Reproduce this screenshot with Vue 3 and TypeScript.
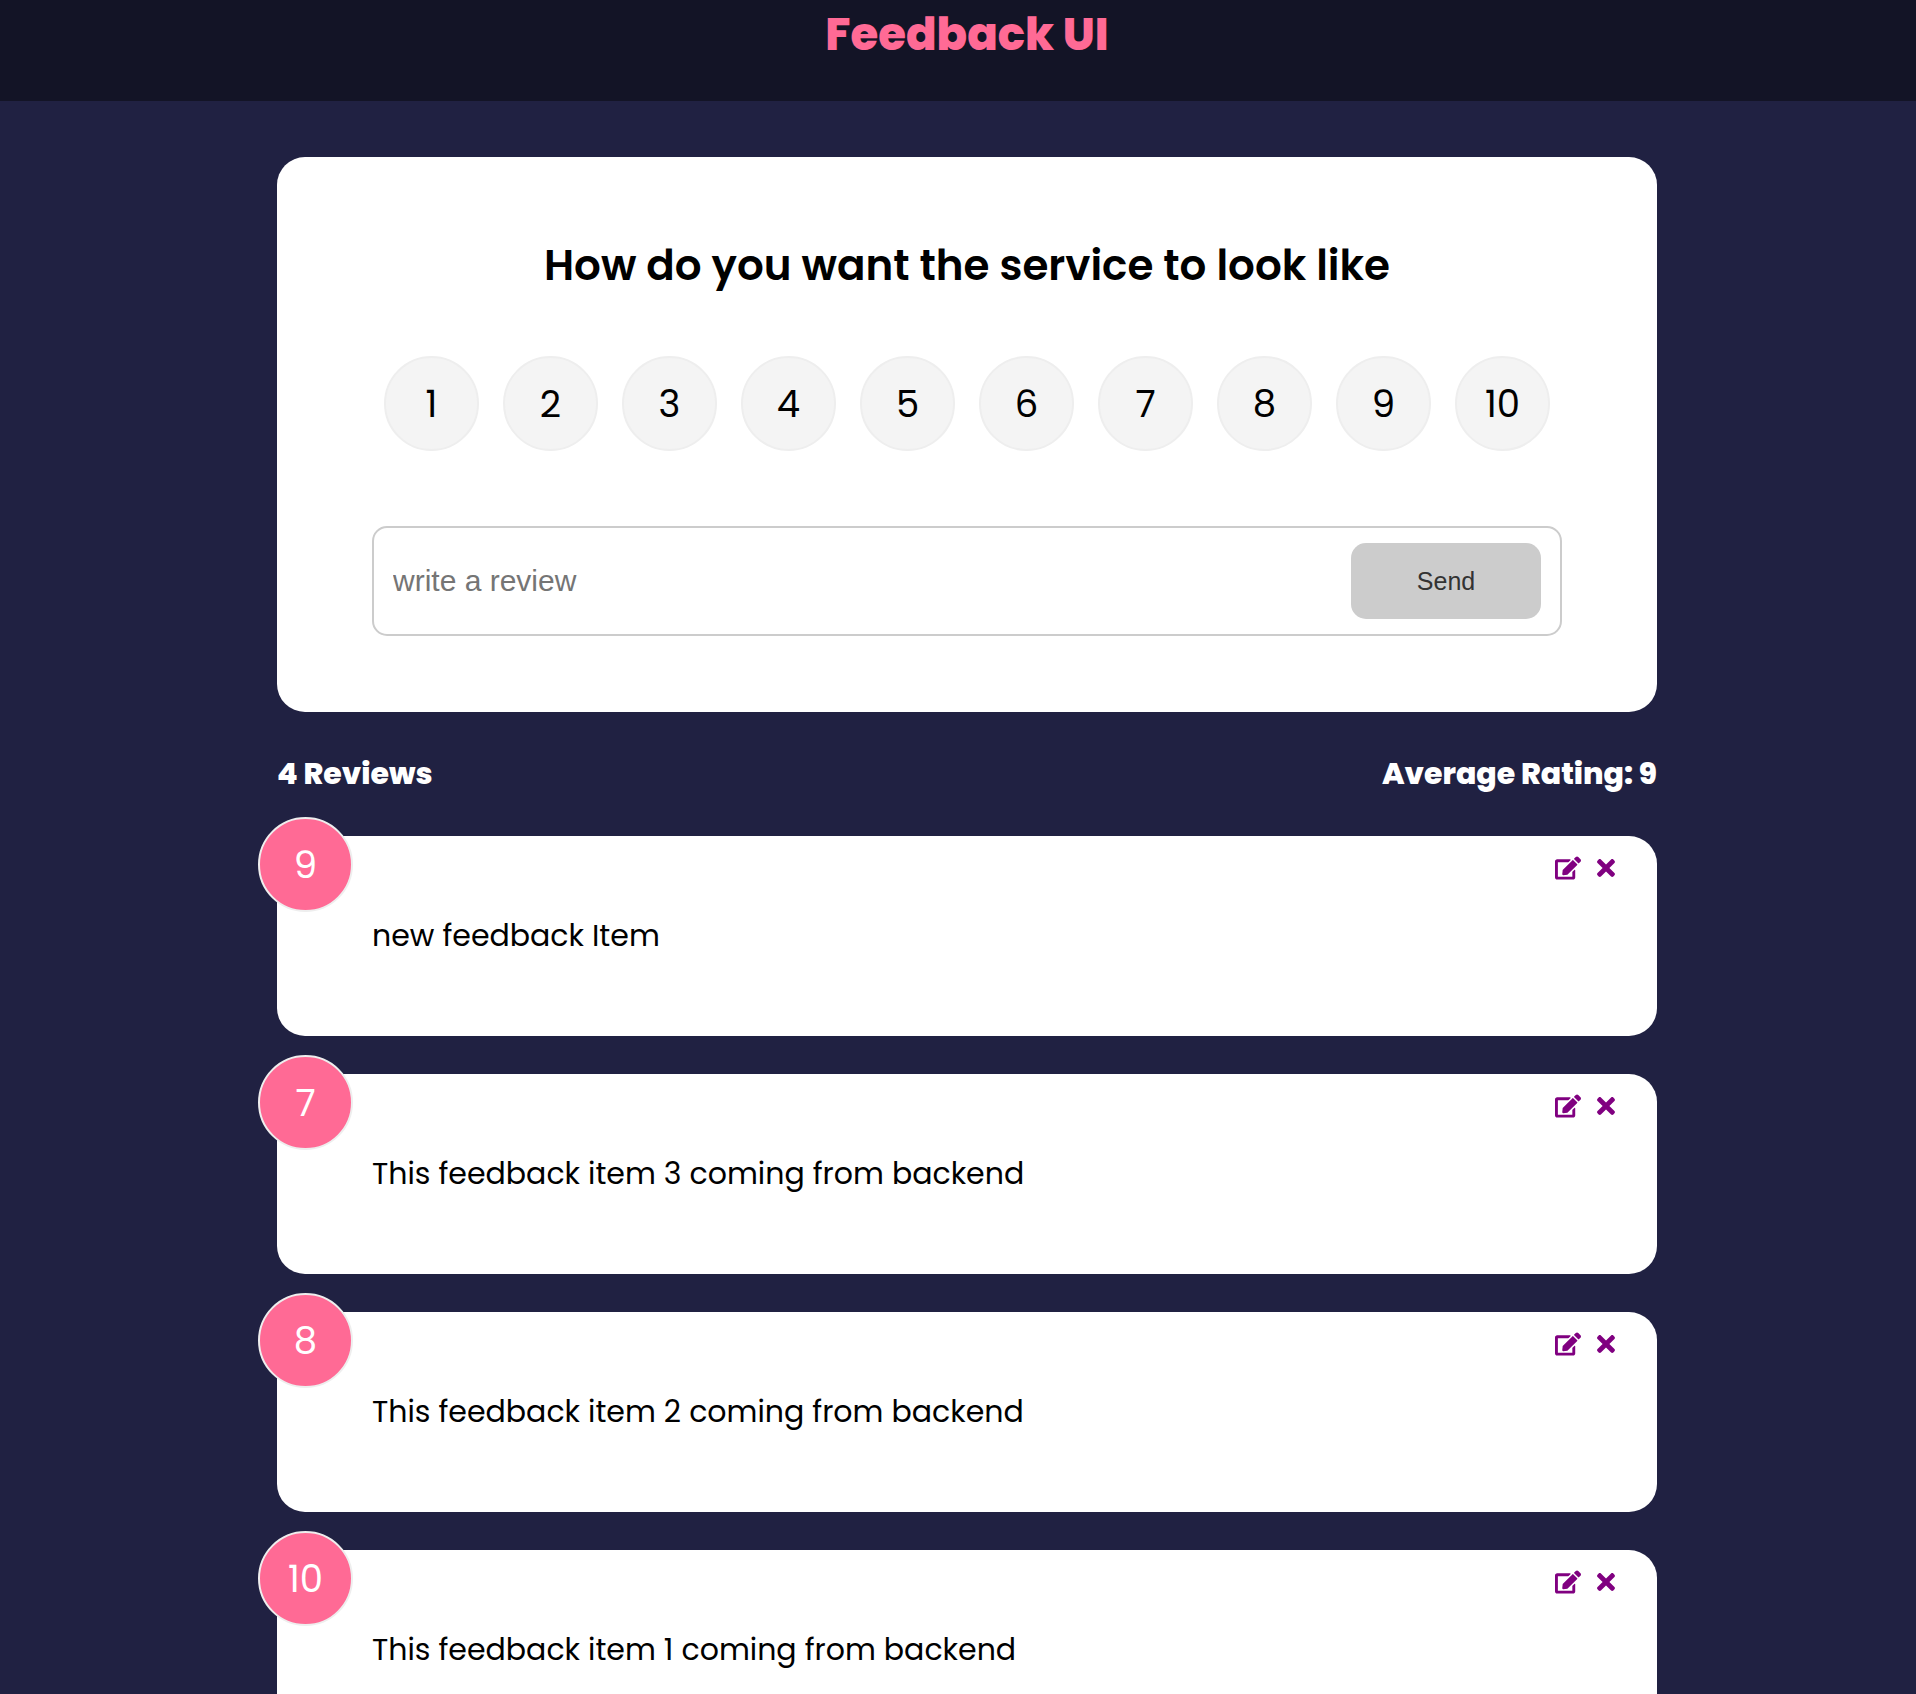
<script setup lang="ts">
import { computed, ref } from 'vue'

interface FeedbackItem {
  id: number
  rating: number
  text: string
}

const items = ref<FeedbackItem[]>([
  { id: 4, rating: 9, text: 'new feedback Item' },
  { id: 3, rating: 7, text: 'This feedback item 3 coming from backend' },
  { id: 2, rating: 8, text: 'This feedback item 2 coming from backend' },
  { id: 1, rating: 10, text: 'This feedback item 1 coming from backend' },
])

const rating = ref<number | null>(null)
const text = ref('')
const editingId = ref<number | null>(null)

const canSend = computed(() => text.value.trim().length >= 10 && rating.value !== null)

const average = computed(() => {
  if (items.value.length === 0) return 0
  const total = items.value.reduce((sum, item) => sum + item.rating, 0)
  return Math.round(total / items.value.length)
})

function send() {
  if (!canSend.value || rating.value === null) return
  const existing = items.value.find((item) => item.id === editingId.value)
  if (existing) {
    existing.text = text.value
    existing.rating = rating.value
  } else {
    items.value.unshift({ id: Date.now(), rating: rating.value, text: text.value })
  }
  editingId.value = null
  rating.value = null
  text.value = ''
}

function edit(item: FeedbackItem) {
  editingId.value = item.id
  rating.value = item.rating
  text.value = item.text
}

function remove(id: number) {
  items.value = items.value.filter((item) => item.id !== id)
}
</script>

<template>
  <div class="page">
    <header class="header">
      <h1 class="title">Feedback UI</h1>
    </header>

    <main class="container">
      <form class="card form" @submit.prevent="send">
        <h2 class="question">How do you want the service to look like</h2>

        <div class="ratings" role="radiogroup" aria-label="Rating">
          <div v-for="n in 10" :key="n" class="rating">
            <input :id="`rating-${n}`" v-model="rating" class="rating-input" type="radio" name="rating" :value="n" />
            <label class="circle" :for="`rating-${n}`">{{ n }}</label>
          </div>
        </div>

        <div class="review">
          <input v-model="text" class="review-input" type="text" placeholder="write a review" aria-label="Review" />
          <button class="send" type="submit" :disabled="!canSend">Send</button>
        </div>
      </form>

      <div class="stats">
        <h4 class="stat">{{ items.length }} Reviews</h4>
        <h4 class="stat">Average Rating: {{ average }}</h4>
      </div>

      <ul class="list">
        <li v-for="item in items" :key="item.id" class="card item">
          <span class="circle badge">{{ item.rating }}</span>
          <div class="actions">
            <button class="icon" type="button" aria-label="Edit" @click="edit(item)">
              <svg viewBox="0 0 576 512" fill="currentColor" aria-hidden="true">
                <path d="M402.6 83.2l90.2 90.2c3.8 3.8 3.8 10 0 13.8L274.4 405.6l-92.8 10.3c-12.4 1.4-22.9-9.1-21.5-21.5l10.3-92.8L388.8 83.2c3.8-3.8 10-3.8 13.8 0zm162-22.9l-48.8-48.8c-15.2-15.2-39.9-15.2-55.2 0l-35.4 35.4c-3.8 3.8-3.8 10 0 13.8l90.2 90.2c3.8 3.8 10 3.8 13.8 0l35.4-35.4c15.2-15.3 15.2-40 0-55.2zM384 346.2V448H64V128h229.8c3.2 0 6.2-1.3 8.5-3.5l40-40c7.6-7.6 2.2-20.5-8.5-20.5H48C21.5 64 0 85.5 0 112v352c0 26.5 21.5 48 48 48h352c26.5 0 48-21.5 48-48V306.2c0-10.7-12.9-16-20.5-8.5l-40 40c-2.2 2.3-3.5 5.3-3.5 8.5z" />
              </svg>
            </button>
            <button class="icon" type="button" aria-label="Delete" @click="remove(item.id)">
              <svg viewBox="0 0 352 512" fill="currentColor" aria-hidden="true">
                <path d="M242.72 256l100.07-100.07c12.28-12.28 12.28-32.19 0-44.48l-22.24-22.24c-12.28-12.28-32.19-12.28-44.48 0L176 189.28 75.93 89.21c-12.28-12.28-32.19-12.28-44.48 0L9.21 111.45c-12.28 12.28-12.28 32.19 0 44.48L109.28 256 9.21 356.07c-12.28 12.28-12.28 32.19 0 44.48l22.24 22.24c12.28 12.28 32.2 12.28 44.48 0L176 322.72l100.07 100.07c12.28 12.28 32.2 12.28 44.48 0l22.24-22.24c12.28-12.28 12.28-32.19 0-44.48L242.72 256z" />
              </svg>
            </button>
          </div>
          <p class="text">{{ item.text }}</p>
        </li>
      </ul>
    </main>
  </div>
</template>

<style>
body {
  margin: 0;
  background: #202142;
}
</style>

<style scoped>
.page {
  font-family: Poppins, Inter, sans-serif;
  color: #000;
}

.page * {
  box-sizing: border-box;
}

.header {
  padding: 5px 0 36px 18px;
  background: #131426;
  color: #ff6a95;
  text-align: center;
}

.title {
  margin: 0;
  font-size: 45px;
  font-weight: 800;
  line-height: 60px;
}

.container {
  max-width: 1398px;
  margin: 0 auto;
  padding: 56px 0 38px 18px;
}

.card {
  position: relative;
  border-radius: 28px;
  background: #fff;
}

.form {
  padding: 76px 95px;
}

.question {
  margin: 0;
  font-size: 42px;
  font-weight: 600;
  line-height: 66px;
  text-align: center;
}

.ratings {
  display: flex;
  justify-content: space-around;
  margin: 57px 0 75px;
}

.rating {
  position: relative;
}

.rating-input {
  position: absolute;
  inset: 0;
  width: 100%;
  height: 100%;
  margin: 0;
  opacity: 0;
  cursor: pointer;
}

.circle {
  display: flex;
  align-items: center;
  justify-content: center;
  width: 95px;
  height: 95px;
  border: 2px solid #eee;
  border-radius: 50%;
  background: #f4f4f4;
  font-size: 37px;
  line-height: 48px;
}

.rating-input:checked + .circle,
.badge {
  background: #ff6a95;
  color: #fff;
}

.review {
  display: flex;
  align-items: center;
  padding: 15px 19px;
  border: 2px solid #ccc;
  border-radius: 15px;
}

.review-input {
  flex: 1;
  min-width: 0;
  padding: 0;
  border: 0;
  outline: 0;
  background: none;
  font-family: "Liberation Sans", Arial, sans-serif;
  font-size: 30px;
}

.review-input::placeholder {
  color: #757575;
}

.send {
  width: 190px;
  height: 76px;
  border: 0;
  border-radius: 15px;
  background: #202142;
  color: #fff;
  font-family: "Liberation Sans", Arial, sans-serif;
  font-size: 25px;
}

.send:disabled {
  background: #ccc;
  color: #333;
}

.stats {
  display: flex;
  justify-content: space-between;
  padding: 38px 0;
  color: #fff;
}

.stat {
  margin: 0;
  font-size: 30px;
  font-weight: 800;
  line-height: 48px;
}

.list {
  display: flex;
  flex-direction: column;
  gap: 38px;
  margin: 0;
  padding: 0;
  list-style: none;
}

.item {
  padding: 76px 95px;
}

.badge {
  position: absolute;
  top: -19px;
  left: -19px;
}

.actions {
  position: absolute;
  top: 19px;
  right: 38px;
  display: flex;
  gap: 12px;
}

.icon {
  display: flex;
  padding: 0;
  border: 0;
  background: none;
  color: purple;
  cursor: pointer;
}

.icon svg {
  width: 26px;
  height: 26px;
}

.text {
  margin: 0;
  font-size: 30px;
  line-height: 48px;
}
</style>
